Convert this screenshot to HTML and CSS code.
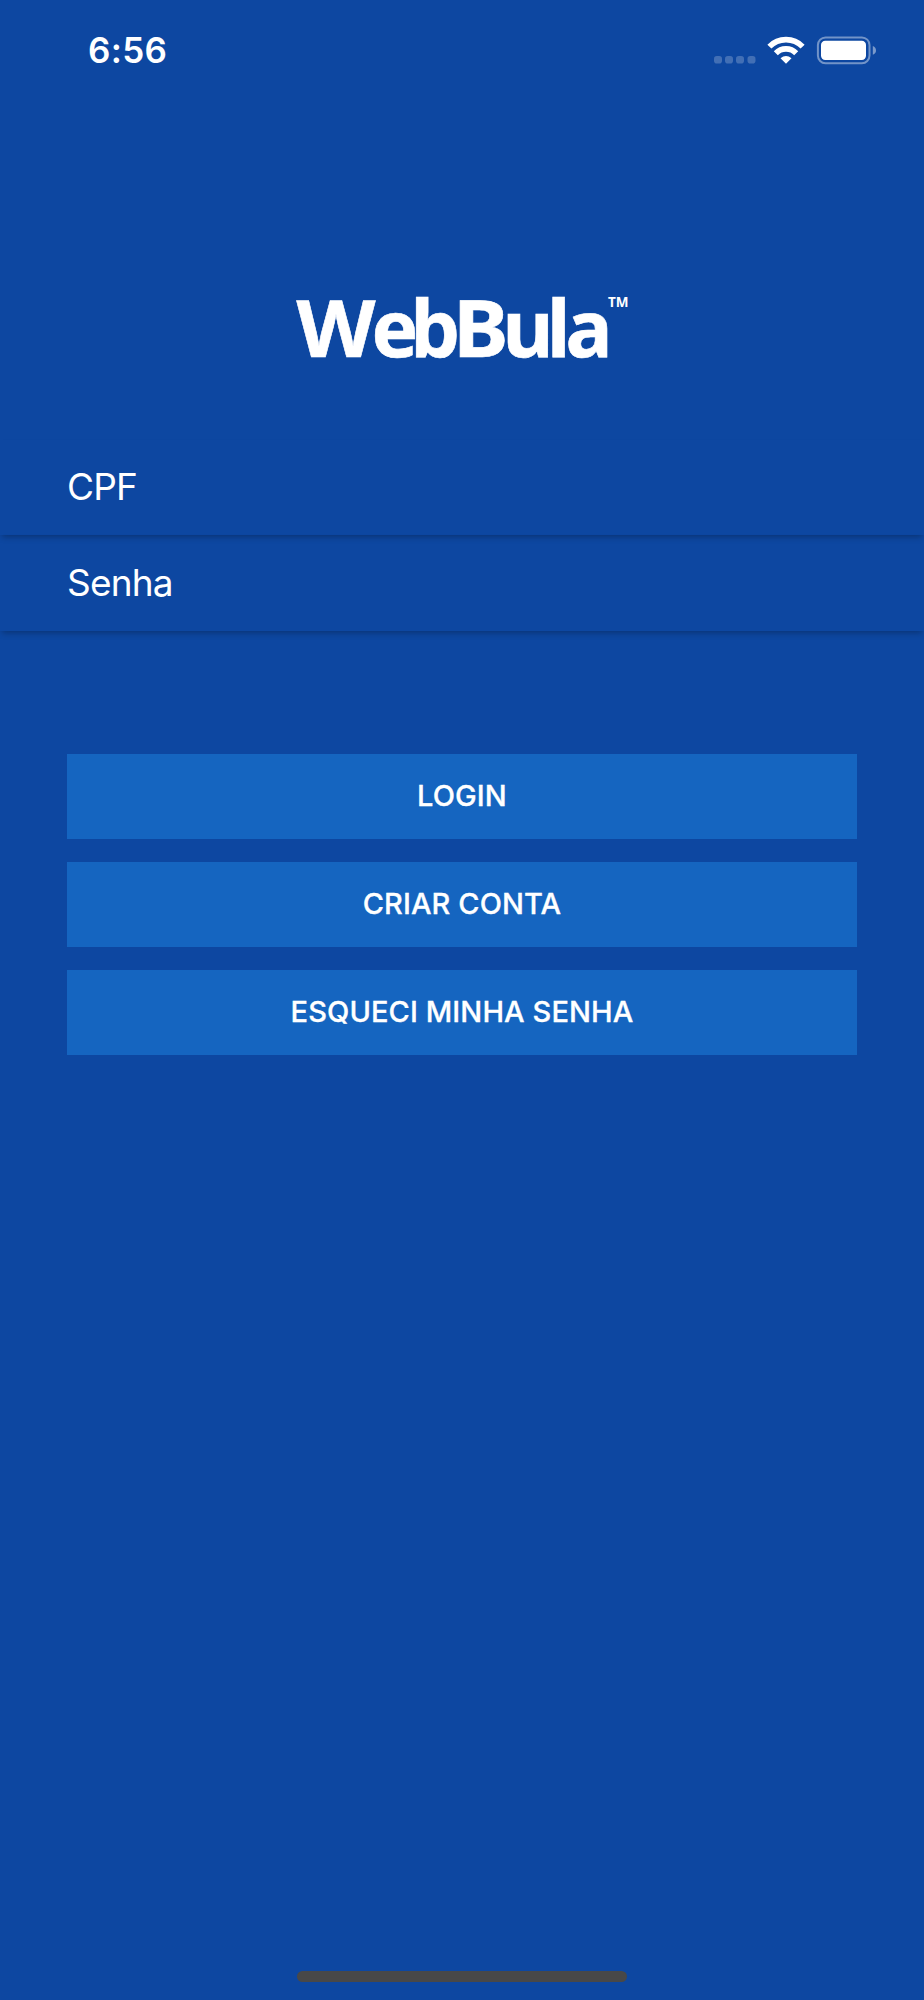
FILE: index.html
```html
<!DOCTYPE html>
<html lang="pt-BR">
<head>
<meta charset="utf-8">
<title>WebBula</title>
<link rel="stylesheet" href="styles.css">
</head>
<body>
<div class="screen">
  <header class="status">
    <span class="time">6:56</span>
    <svg class="status-icons" viewBox="0 0 164 30" width="164" height="30" aria-hidden="true">
      <g fill="#fff" fill-opacity=".22">
        <rect x="0" y="20" width="8" height="7.5" rx="2.8"/>
        <rect x="11" y="20" width="8" height="7.5" rx="2.8"/>
        <rect x="22" y="20" width="8" height="7.5" rx="2.8"/>
        <rect x="33.5" y="20" width="8" height="7.5" rx="2.8"/>
      </g>
      <g fill="none" stroke="#fff" stroke-width="5.6">
        <path d="M55.4 10.6A23.2 23.2 0 0 1 88.6 10.6"/>
        <path d="M61.8 17.2A14.2 14.2 0 0 1 82.2 17.2"/>
      </g>
      <path d="M72 27.8 66.5 22.2Q72 17.6 77.5 22.2Z" fill="#fff"/>
      <rect x="103.9" y="1.4" width="51.6" height="25.8" rx="7.6" fill="none" stroke="#fff" stroke-opacity=".42" stroke-width="2"/>
      <rect x="107" y="4.8" width="45" height="19.2" rx="4.2" fill="#fff"/>
      <path d="M158.8 10Q162 11.4 162 14.4T158.8 18.8Z" fill="#fff" fill-opacity=".45"/>
    </svg>
  </header>
  <div class="brand">
    <svg viewBox="0 0 340 80" width="340" height="80" overflow="visible" role="img" aria-label="WebBula">
      <text class="brand-name" y="64.5"><tspan x="4.5" textLength="79" lengthAdjust="spacingAndGlyphs">W</tspan><tspan x="79.5 118.5">eb</tspan><tspan x="161" textLength="55.5" lengthAdjust="spacingAndGlyphs">B</tspan><tspan x="210.5 255 273.5">ula</tspan></text>
      <text class="brand-mark" x="316" y="15" textLength="20.5" lengthAdjust="spacingAndGlyphs">TM</text>
    </svg>
  </div>
  <form class="login">
    <label class="field"><span>CPF</span></label>
    <label class="field"><span>Senha</span></label>
    <div class="actions">
      <button type="button" class="action">LOGIN</button>
      <button type="button" class="action">CRIAR CONTA</button>
      <button type="button" class="action">ESQUECI MINHA SENHA</button>
    </div>
  </form>
  <div class="home-indicator"></div>
</div>
</body>
</html>
```
FILE: styles.css
```css
* { box-sizing: border-box; }
body { margin: 0; background: #0d47a1; }
.screen {
  display: flex;
  flex-direction: column;
  height: 2000px;
  color: #fff;
  font-family: Inter, "Liberation Sans", sans-serif;
}
.status {
  display: flex;
  justify-content: space-between;
  align-items: flex-start;
  height: 292px;
  padding: 36px 46px 0 88px;
}
.time {
  font-size: 35px;
  font-weight: 600;
  line-height: 29px;
  letter-spacing: .3px;
}
.status-icons { display: block; }
.brand {
  display: flex;
  justify-content: center;
  height: 148px;
}
.brand-name {
  font: 700 78.5px "Noto Sans", sans-serif;
  fill: #fff;
  stroke: #fff;
  stroke-width: .6;
}
.brand-mark {
  font: 700 14px "Noto Sans", sans-serif;
  fill: #fff;
}
.login { display: flex; flex-direction: column; }
.field {
  display: flex;
  align-items: center;
  height: 96px;
  padding: 0 67px 2px;
  font-size: 37px;
  font-weight: 400;
  letter-spacing: -.8px;
  box-shadow: 0 4px 6px -2px rgba(0, 0, 0, .27);
}
.field:first-child { height: 95px; }
.actions {
  display: flex;
  flex-direction: column;
  gap: 23px;
  padding: 123px 67px 0;
}
.action {
  height: 85px;
  padding: 0 0 1px;
  border: 0;
  background: #1565c0;
  color: #fff;
  font: 500 29px/84px Inter, "Liberation Sans", sans-serif;
  letter-spacing: .1px;
  -webkit-text-stroke: .3px #fff;
}
.home-indicator {
  width: 330px;
  height: 11px;
  margin: auto auto 18px;
  border-radius: 6px;
  background: #484848;
}
```
